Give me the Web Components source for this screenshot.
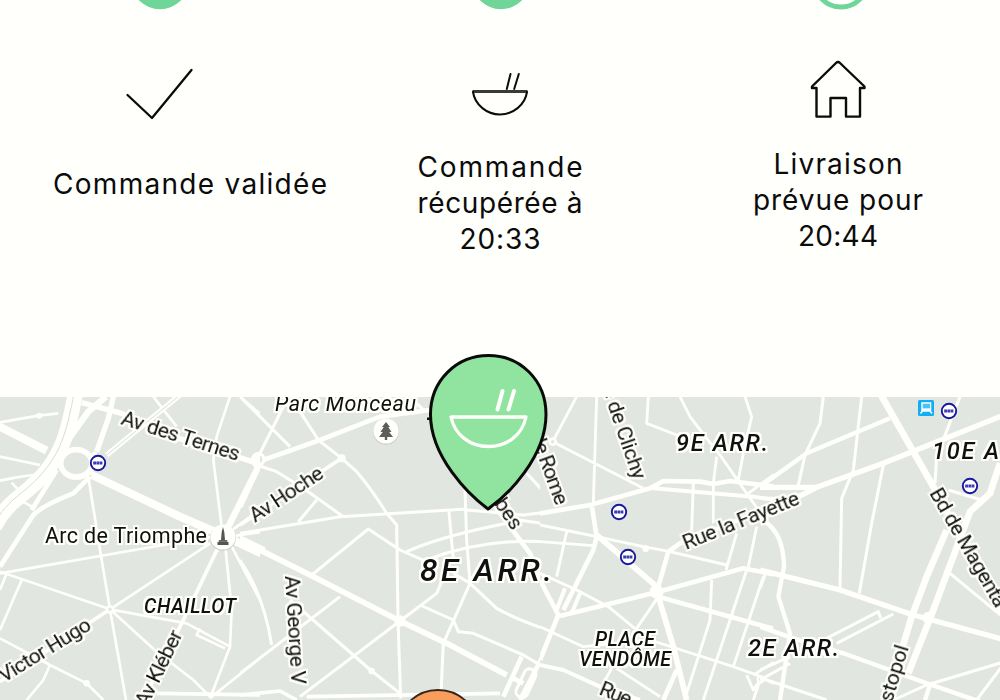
<!DOCTYPE html>
<html lang="fr">
<head>
<meta charset="utf-8">
<title>Suivi de commande</title>
<style>
html,body{margin:0;height:100%;overflow:hidden;background:#fffffc}
</style>
</head>
<body>
<order-tracker>
  <progress-dots slot="progress"></progress-dots>
  <order-step slot="step" style="--gap:36px" icon="check"><step-line w="273">Commande validée</step-line></order-step>
  <order-step slot="step" style="--gap:19px" icon="bowl"><step-line w="164">Commande</step-line><step-line w="164">récupérée à</step-line><step-line w="80">20:33</step-line></order-step>
  <order-step slot="step" style="--gap:16px;padding-left:56px" icon="house"><step-line w="128">Livraison</step-line><step-line w="169">prévue pour</step-line><step-line w="79">20:44</step-line></order-step>
  <city-map slot="map"></city-map>
</order-tracker>

<script>
const define = (name, html, ready) => customElements.define(name, class extends HTMLElement {
  connectedCallback() {
    if (this.shadowRoot) return;
    const root = this.attachShadow({mode: 'open'});
    root.innerHTML = typeof html === 'function' ? html(this) : html;
    if (ready) ready(this, root);
  }
});

define('order-tracker', `
<style>
:host{display:flex;flex-direction:column;width:1000px;height:700px;overflow:hidden;background:#fffffc;color:#0b0b0b;font-family:Inter,"Liberation Sans",sans-serif}
.top{height:397px;flex:none}
.steps{display:grid;grid-template-columns:380px 240px 380px;padding-top:50px}
</style>
<div class="top"><slot name="progress"></slot><div class="steps"><slot name="step"></slot></div></div>
<slot name="map"></slot>`);

define('progress-dots', `
<style>
:host{display:grid;grid-template-columns:320px 362px 318px;justify-items:center;height:10px}
svg{display:block}
</style>
<svg width="60" height="10"><circle cx="30" cy="-19.7" r="29" fill="#70d598"/></svg>
<svg width="60" height="10"><circle cx="30" cy="-19.7" r="29" fill="#70d598"/></svg>
<svg width="60" height="10"><circle cx="30" cy="-19.7" r="26.7" fill="none" stroke="#70d598" stroke-width="4.8"/></svg>`);

const icons = {
  check: '<path d="M-62.500 35L-38 58L1.500 10" stroke-width="2.3"/>',
  bowl: '<path d="M-27.500 31.600H27.500" stroke="#3a3a3a" stroke-width="3" stroke-linecap="butt"/><path d="M-27 32C-25 45-13 54.500 0 54.500S25 45 27 32M10.500 14L6.800 29M18.800 14L14.200 29" stroke-width="2"/>',
  house: '<path d="M0 2Q-1 2-2 3L-26 26.500V28H-21.500V56.600H-7.500V38H8V56.600H22V28H26.500V26.500L2 3Q1 2 0 2Z" stroke-width="2.400"/>'
};
define('order-step', el => `
<style>
:host{display:flex;flex-direction:column;align-items:center;box-sizing:border-box}
svg{display:block;overflow:visible}
.label{display:flex;flex-direction:column;align-items:center;padding-top:var(--gap)}
</style>
<svg width="140" height="70" viewBox="-70 0 140 70" fill="none" stroke="#0b0b0b" stroke-linejoin="round" stroke-linecap="round">${icons[el.getAttribute('icon')]}</svg>
<div class="label"><slot></slot></div>`);

define('step-line', `
<style>:host{display:block;height:36px;font-size:28px;line-height:36px;white-space:nowrap}</style><span><slot></slot></span>`,
(el, root) => {
  const span = root.querySelector('span');
  const n = el.textContent.length;
  const natural = span.getBoundingClientRect().width;
  const extra = (+el.getAttribute('w') + 1 - natural) / (n - 1);
  el.style.letterSpacing = extra + 'px';
  el.style.marginRight = -extra + 'px';
});

define('map-label', el => {
  const a = (k, d) => el.getAttribute(k) || d;
  return `
<style>
:host{position:absolute;left:${a('x')}px;top:${a('y') - 397}px;width:0;height:0}
svg{display:block;overflow:visible}
text{font-family:Roboto,"Noto Sans",sans-serif;font-size:${a('size', 21)}px;font-weight:${a('weight', 400)};font-style:${a('kind', 'normal')};fill:#101010}
</style>
<svg width="1" height="1">
<filter id="halo" x="-10%" y="-30%" width="120%" height="160%" color-interpolation-filters="sRGB">
<feMorphology in="SourceAlpha" operator="dilate" radius="2"/><feGaussianBlur stdDeviation=".6" result="edge"/>
<feFlood flood-color="#fffffb"/><feComposite in2="edge" operator="in" result="glow"/>
<feMerge><feMergeNode in="glow"/><feMergeNode in="glow"/><feMergeNode in="SourceGraphic"/></feMerge></filter>
<text filter="url(#halo)" transform="rotate(${a('r', 0)})" textLength="${a('w')}">${el.textContent}</text></svg>`;
});

define('map-mark', el => {
  const marks = {
    metro: '<circle r="7.200" fill="#fffffb" stroke="#1717a0" stroke-width="1.900"/><path d="M-4.800 0H4.800" stroke="#3b3bb5" stroke-width="3" stroke-dasharray="2.800 .4"/>',
    rail: '<rect x="-8" y="-8" width="16" height="16" rx="1.500" fill="#12aef5"/><path d="M-4-5H4.500V3H-4ZM-3.500 3L-5.500 5.500M4 3L6 5.500" fill="none" stroke="#fff" stroke-width="1.500"/><rect x="-3" y="-4" width="6.500" height="4" fill="#47c4f8"/><path d="M-4 1.500H4.500" stroke="#fff" stroke-width="2.400"/>',
    park: '<circle r="13" cy=".8" fill="#c9cdc7"/><circle r="12.600" fill="#fffffb"/><path d="M0-9L4-4H2.200L5.500 1H3.200L7 6H1.200V9H-1.200V6H-7L-3.200 1H-5.500L-2.200-4H-4Z" fill="#5d5d5d"/>',
    tower: '<circle r="13" cy=".8" fill="#c9cdc7"/><circle r="12.600" fill="#fffffb"/><path d="M0-10L1.300-5L2 3H4V5H5.500V8H-5.500V5H-4V3H-2L-1.300-5Z" fill="#555"/><path d="M-5 4.200H5" stroke="#999" stroke-width=".7"/>'
  };
  return `<style>:host{position:absolute;left:${el.getAttribute('x')}px;top:${el.getAttribute('y') - 397}px;width:0;height:0}svg{display:block;overflow:visible}</style><svg width="1" height="1">${marks[el.getAttribute('kind')]}</svg>`;
});

define('map-pin', el => `
<style>:host{position:absolute;left:${el.getAttribute('x')}px;top:${el.getAttribute('y') - 397}px;width:0;height:0;z-index:2}svg{display:block;overflow:visible}</style>
<svg width="1" height="1" stroke-linejoin="round">${el.getAttribute('kind') === 'meal'
  ? `<path d="M0 0C-19-14-57.500-52-57.500-94.500C-57.500-129-31-153.500 .5-153.500S58-129 58-94.500C58-52 20-14 0 0Z" fill="#90e4a0" stroke="#0a0a0a" stroke-width="3"/>
     <g fill="none" stroke="#fffffb"><path d="M-37-92H38C34-73 18-62.500 .5-62.500S-33-73-37-92Z" stroke-width="3.300"/><path d="M14.500-118L9.500-99.500M26-118L20.500-99.500" stroke-width="4" stroke-linecap="round"/></g>`
  : '<circle cy="41" r="41" fill="#f99d5c" stroke="#33261d" stroke-width="1.800"/>'}
</svg>`);

// Road tiles: [x offset, y offset, width, {stroke width: path data}], drawn at a third of their units.
const tiles = [
 [0, 380, 780, {
  46:'M226 40C208 140 190 210 142 270C85 345 30 350-18 440',
  24:'M-5 138L140 212M275 285L540 410L660 462L800 528',
  19:'M318 50L265 95Q225 150 190 200M680 450L785 240',
  16:'M245 68L365 100L520 170L780 252M340 50L325 115L290 215M540 45L320 225',
  14:'M270 290L220 340Q130 375 100 405L0 560M170 270L95 390M285 215L270 285',
  11:'M330 688L0 905M670 470L550 720L430 960M470 940L780 945',
  8:'M0 127L115 107L175 100M0 230L120 255M0 302Q50 290 100 285M35 308L60 335M60 360L105 385M460 50L530 140M690 50L650 170L640 240L665 440M720 50L790 110M265 290L300 510L330 688L378 960M0 580L490 495L640 470M0 575L330 688L560 730L690 800M20 580L0 630M65 600L0 750M330 688L630 490M330 688L470 815L580 900L630 950M675 490L695 690L690 800L630 955M690 490L785 670M690 455L785 385M690 470L790 455M600 745L590 765L675 805M0 775L150 855L260 910L310 960M150 855L130 900L80 960M630 955L785 830'
 }, '<ellipse cx="229" cy="250" rx="47" ry="41" fill="none" stroke-width="17"/><circle cx="775" cy="245" r="20" stroke="none" fill="#fffffb"/><circle cx="330" cy="688" r="13" stroke="none" fill="#fffffb"/><circle cx="118" cy="107" r="9" stroke="none" fill="#fffffb"/><circle cx="260" cy="910" r="10" stroke="none" fill="#fffffb"/><g stroke="#d8ddd6" fill="none" stroke-width="3"><path d="M222 40C203 140 186 207 138 266C80 342 27 347-20 436M540 45L320 225"/><circle cx="330" cy="688" r="5" fill="#e2e6e0" stroke="none"/></g>'],
 [240, 340, 900, {
  24:'M-30 584L72 633',
  17:'M0 600L200 700L480 843L620 910L800 1005M58 372L0 500',
  14:'M70 360L240 300L420 230L570 210M750 480L870 640L960 840M970 830L840 1080M845 950L790 1070M820 1015L850 1030',
  11:'M305 355L0 555M200 1070L780 1060M0 1065L120 1053L170 1080',
  9:'M0 170L150 320M130 200L50 360M-10 350L50 375L110 395L190 445L310 530M180 215L235 300L305 355L350 395Q390 440 440 520L470 555L474 840L482 1075M0 580L300 530L470 520L680 507M230 480L175 545M215 705L385 567L480 630L560 665M0 660Q70 760 95 915M0 1000L300 770M150 780L395 993L480 1060M180 1070L480 843L590 760L605 725M500 635Q600 590 800 550M560 660Q750 585 980 610M675 450L680 600L690 730M627 515L640 660M680 510L850 525L980 510M800 535L980 560M690 730L610 910L603 1060M540 795L640 840L655 875L700 880L850 945L900 975L980 990M640 700L690 730L770 805Q830 840 980 890M860 400L925 470L925 520M905 290L940 310L980 290M520 180L555 215'
 }, '<circle cx="55" cy="358" r="17" fill="none" stroke-width="10"/><circle cx="305" cy="355" r="12" stroke="none" fill="#fffffb"/><circle cx="395" cy="993" r="10" stroke="none" fill="#fffffb"/><circle cx="480" cy="843" r="17" stroke="none" fill="#fffffb"/><rect x="842" y="985" width="36" height="90" rx="16" fill="none" stroke-width="9" transform="rotate(25 860 1025)"/>'],
 [540, 380, 700, {
  17:'M170 465L350 620M350 620L355 650L400 800L440 960',
  14:'M0 400L150 375L330 325L370 303L480 305L520 312L570 303L720 322M155 375L170 470L160 510L70 690M385 515L355 620M385 515L420 490L720 370M60 708L350 637L610 565L720 587M355 650L720 752M0 600L55 705L0 840M410 870L370 960',
  12:'M340 325L640 350L720 362M0 855L70 870L180 920L300 960M120 640L95 700M75 625L50 690',
  8.5:'M110 50L38 185L310 325M170 50L160 370M0 435L170 470L310 500L390 515L560 555M0 485L160 497M80 455L50 590M355 650L290 745M0 580L110 630L205 680L290 750M0 740L130 800L330 780L580 860L650 885L720 920M230 865L360 950M215 865L190 910M325 50L320 130L410 165M420 50L450 110L500 175L540 225L620 340L690 440L720 480M615 50L635 110L610 220L595 300M530 230L520 310L520 430M460 310L455 450M590 460L558 570M650 440L625 560M620 570L570 720L490 960M670 590L580 860M515 600L510 720L440 940M625 340L720 270M720 610Q700 660 720 710M620 885L640 930L660 900L640 960M640 885L720 835'
 }, '<circle cx="350" cy="635" r="21" stroke="none" fill="#fffffb"/><circle cx="38" cy="185" r="13" stroke="none" fill="#fffffb"/><circle cx="317" cy="506" r="10" stroke="none" fill="#fffffb"/><circle cx="38" cy="185" r="5" stroke="none" fill="#e2e6e0"/><circle cx="662" cy="898" r="9" fill="#e2e6e0" stroke-width="7"/>'],
 [760, 380, 730, {
  20:'M360 40L520 320L730 705M720 250L690 340L630 395L520 690L445 880M560 450L500 590L455 710L380 960',
  16:'M0 322L170 322L370 250L725 108M170 322L-20 420M0 570L240 630L460 705L730 778',
  13:'M0 320L140 220L390 115M15 425Q70 460 72 560L55 650L90 760L60 960M0 740L100 775L250 820L500 910L660 965M510 915L495 960',
  9:'M190 50L180 130L135 225L115 315M305 50L280 270L245 355L240 625M370 255L335 430L298 640M600 50L530 230L525 310M565 330L665 360M570 580L725 708M0 625L15 585M190 780L355 695L362 715M230 790L400 702M0 870L90 830M0 900L90 850M0 893L200 960M400 960L500 915L725 848M650 960L725 860M0 355L70 355'
 }, '<circle cx="505" cy="713" r="18" stroke="none" fill="#fffffb"/>']
];
const drawTile = ([x, y, w, roads, extra]) => `<svg x="${x}" y="${y}" width="${w / 3}" height="400" viewBox="0 0 ${w} 1200"><g fill="none" stroke="#fffffb" stroke-linejoin="round">${Object.entries(roads).map(([sw, d]) => `<path stroke-width="${sw}" d="${d}"/>`).join('')}${extra}</g></svg>`;

define('city-map', `
<style>
:host{display:block;position:relative;flex:1;background:#e2e6e0}
.view{position:absolute;inset:0;overflow:hidden}
.roads{display:block}
</style>
<div class="view">
<svg class="roads" width="1000" height="303" viewBox="0 397 1000 303">${tiles.map(drawTile).join('')}<rect x="427" y="417.500" width="3" height="2.500" fill="#111"/></svg>
<map-mark kind="park" x="386" y="431"></map-mark>
<map-mark kind="tower" x="223" y="537"></map-mark>
<map-label x="120" y="424" r="17.500" w="123">Av des Ternes</map-label>
<map-label x="45" y="543" w="162" size="21.500">Arc de Triomphe</map-label>
<map-label x="144" y="613" w="92" size="19.500" weight="500" kind="italic">CHAILLOT</map-label>
<map-label x="4" y="683" r="-31.500" w="104">Victor Hugo</map-label>
<map-label x="147" y="708" r="-64" w="82">Av Kléber</map-label>
<map-label x="275" y="410.500" w="141" size="21.500" kind="italic">Parc Monceau</map-label>
<map-label x="255" y="523" r="-33.500" w="84">Av Hoche</map-label>
<map-label x="284.500" y="576" r="86.500" w="109">Av George V</map-label>
<map-label x="420" y="580.500" w="132" size="31.500" weight="500" kind="italic">8E ARR.</map-label>
<map-label x="676" y="451" w="92" size="23.500" weight="500" kind="italic">9E ARR.</map-label>
<map-label x="932" y="459" w="67" size="23.500" weight="500" kind="italic">10E A</map-label>
<map-label x="748" y="656" w="91" size="23.500" weight="500" kind="italic">2E ARR.</map-label>
<map-label x="595" y="646" w="60" size="19.500" weight="500" kind="italic">PLACE</map-label>
<map-label x="579" y="666" w="92" size="19.500" weight="500" kind="italic">VENDÔME</map-label>
<map-label x="686" y="550" r="-22" w="124">Rue la Fayette</map-label>
<map-label x="602" y="389" r="71" w="97">e de Clichy</map-label>
<map-label x="530" y="435" r="70" w="76">de Rome</map-label>
<map-label x="490" y="498" r="56" w="40">rbes</map-label>
<map-label x="929" y="493" r="60" w="134">Bd de Magenta</map-label>
<map-label x="892" y="703" r="-73" w="58">stopol</map-label>
<map-label x="598" y="694" r="22" w="33">Rue</map-label>
<map-mark kind="metro" x="98" y="463"></map-mark>
<map-mark kind="metro" x="949" y="410.500"></map-mark>
<map-mark kind="metro" x="970" y="486"></map-mark>
<map-mark kind="metro" x="619" y="511.500"></map-mark>
<map-mark kind="metro" x="628" y="556.500"></map-mark>
<map-mark kind="rail" x="926" y="408"></map-mark>
<map-pin kind="rider" x="438" y="689.500"></map-pin>
</div>
<map-pin kind="meal" x="487.500" y="509"></map-pin>`);
</script>
</body>
</html>
